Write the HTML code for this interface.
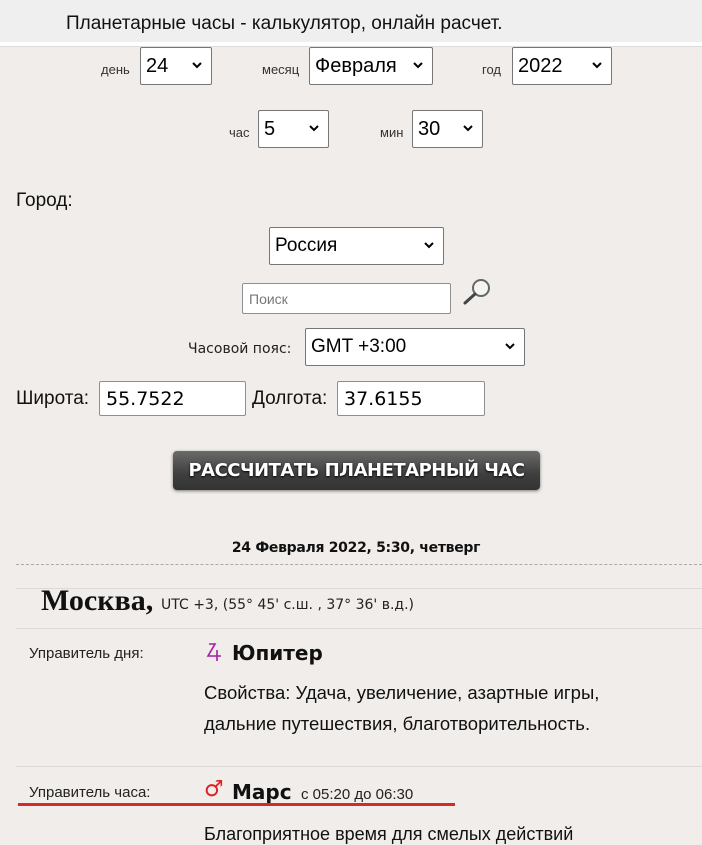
<!DOCTYPE html>
<html><head><meta charset="utf-8"><style>
*{margin:0;padding:0;box-sizing:border-box}
body{width:702px;height:828px;overflow:hidden;background:#f0edea;font-family:"Liberation Sans","DejaVu Sans",sans-serif;color:#111;position:relative}
.a{position:absolute;white-space:nowrap}
.sel{position:absolute;background:#fff;border:1px solid #767676;border-radius:2px;font-size:20px;padding-left:5px;display:flex;align-items:center;color:#000}
.sel svg{position:absolute;right:9px;top:50%;margin-top:-4px}
.inp{position:absolute;background:#fff;border:1px solid #8f8f8f;border-radius:2px;font-size:19px;padding-left:6px;display:flex;align-items:center;font-family:"DejaVu Sans",sans-serif;color:#000}
.lab{font-size:13px;color:#333}
.hl{position:absolute;left:16px;right:0;height:1px;background:#dcd9d6}
</style></head><body>
<div class="a" style="left:0;top:0;width:702px;height:42px;background:#efefef"></div>
<div class="a" style="left:0;top:42px;width:702px;height:4px;background:#fff"></div>
<div class="a" style="left:0;top:46px;width:702px;height:1px;background:#ddd"></div>
<div class="a" style="left:66px;top:13px;font-size:19px;color:#111">Планетарные часы - калькулятор, онлайн расчет.</div>

<div class="a lab" style="left:101px;top:62px">день</div>
<div class="sel" style="left:140px;top:47px;width:72px;height:38px">24<svg width="10" height="7"><polyline points="1,1 5,5 9,1" fill="none" stroke="#000" stroke-width="2"/></svg></div>
<div class="a lab" style="left:262px;top:62px">месяц</div>
<div class="sel" style="left:309px;top:47px;width:124px;height:38px">Февраля<svg width="10" height="7"><polyline points="1,1 5,5 9,1" fill="none" stroke="#000" stroke-width="2"/></svg></div>
<div class="a lab" style="left:482px;top:62px">год</div>
<div class="sel" style="left:512px;top:47px;width:100px;height:38px">2022<svg width="10" height="7"><polyline points="1,1 5,5 9,1" fill="none" stroke="#000" stroke-width="2"/></svg></div>

<div class="a lab" style="left:229px;top:125px">час</div>
<div class="sel" style="left:258px;top:110px;width:71px;height:38px">5<svg width="10" height="7"><polyline points="1,1 5,5 9,1" fill="none" stroke="#000" stroke-width="2"/></svg></div>
<div class="a lab" style="left:380px;top:125px">мин</div>
<div class="sel" style="left:412px;top:110px;width:71px;height:38px">30<svg width="10" height="7"><polyline points="1,1 5,5 9,1" fill="none" stroke="#000" stroke-width="2"/></svg></div>

<div class="a" style="left:16px;top:190px;font-size:19px">Город:</div>
<div class="sel" style="left:269px;top:227px;width:175px;height:38px;font-size:19px">Россия<svg width="10" height="7"><polyline points="1,1 5,5 9,1" fill="none" stroke="#000" stroke-width="2"/></svg></div>
<div class="inp" style="left:242px;top:283px;width:209px;height:31px;font-size:14px;color:#777;font-family:'Liberation Sans',sans-serif">Поиск</div>
<svg class="a" style="left:459px;top:278px" width="34" height="30"><circle cx="22" cy="10" r="8" fill="#f4f4f2" stroke="#666" stroke-width="2"/><line x1="16" y1="16" x2="6" y2="25" stroke="#444" stroke-width="3" stroke-linecap="round"/></svg>

<div class="a" style="left:188px;top:341px;font-size:14px;font-family:'DejaVu Sans',sans-serif;color:#222">Часовой пояс:</div>
<div class="sel" style="left:305px;top:328px;width:220px;height:38px;font-size:19px">GMT +3:00<svg width="10" height="7"><polyline points="1,1 5,5 9,1" fill="none" stroke="#000" stroke-width="2"/></svg></div>

<div class="a" style="left:16px;top:388px;font-size:19px">Широта:</div>
<div class="inp" style="left:99px;top:381px;width:147px;height:35px">55.7522</div>
<div class="a" style="left:252px;top:388px;font-size:19px">Долгота:</div>
<div class="inp" style="left:337px;top:381px;width:148px;height:35px">37.6155</div>

<div class="a" style="left:173px;top:451px;width:367px;height:39px;border-radius:4px;background:linear-gradient(#6a6a6a,#3e3e3e 60%,#333);box-shadow:0 1px 3px rgba(0,0,0,.5);color:#fff;font-weight:bold;font-size:18px;text-align:center;line-height:39px;text-shadow:0 1px 2px #000;font-family:'DejaVu Sans',sans-serif;letter-spacing:-0.5px">РАССЧИТАТЬ ПЛАНЕТАРНЫЙ ЧАС</div>

<div class="a" style="left:0;width:712px;top:540px;text-align:center;font-size:14px;font-weight:bold;font-family:'DejaVu Sans',sans-serif;letter-spacing:-0.3px">24 Февраля 2022, 5:30, четверг</div>
<div class="a" style="left:16px;right:0;top:564px;border-top:1px dashed #aaa"></div>
<div class="hl" style="top:588px"></div>
<div class="a" style="left:41px;top:584px;font-size:30px;font-weight:bold;font-family:'Liberation Serif',serif">Москва,</div>
<div class="a" style="left:161px;top:597px;font-size:14px;font-family:'DejaVu Sans',sans-serif;color:#222">UTC +3, (55° 45' с.ш. , 37° 36' в.д.)</div>
<div class="hl" style="top:628px"></div>

<div class="a" style="left:29px;top:645px;font-size:15px;color:#222">Управитель дня:</div>
<svg class="a" style="left:205px;top:641px" width="18" height="22"><path d="M4 3 L10 3 L3 15 L16 15 M12 9 L12 20" fill="none" stroke="#a020a0" stroke-width="1.6"/></svg>
<div class="a" style="left:232px;top:641px;font-size:20px;font-weight:bold;font-family:'DejaVu Sans',sans-serif">Юпитер</div>
<div class="a" style="left:204px;top:682px;font-size:18.5px;color:#111">Свойства: Удача, увеличение, азартные игры,</div>
<div class="a" style="left:204px;top:713px;font-size:18.5px;color:#111">дальние путешествия, благотворительность.</div>
<div class="hl" style="top:766px"></div>

<div class="a" style="left:29px;top:784px;font-size:15px;color:#222">Управитель часа:</div>
<div class="a" style="left:204px;top:777px;font-size:22px;color:#d22;font-family:'DejaVu Sans',sans-serif">♂</div>
<div class="a" style="left:232px;top:780px;font-size:20px;font-weight:bold;font-family:'DejaVu Sans',sans-serif">Марс</div>
<div class="a" style="left:301px;top:786px;font-size:15px;color:#222">с 05:20 до 06:30</div>
<div class="a" style="left:18px;top:803px;width:437px;height:3px;background:#d42a2a"></div>
<div class="a" style="left:204px;top:824px;font-size:18px">Благоприятное время для смелых действий</div>
</body></html>
